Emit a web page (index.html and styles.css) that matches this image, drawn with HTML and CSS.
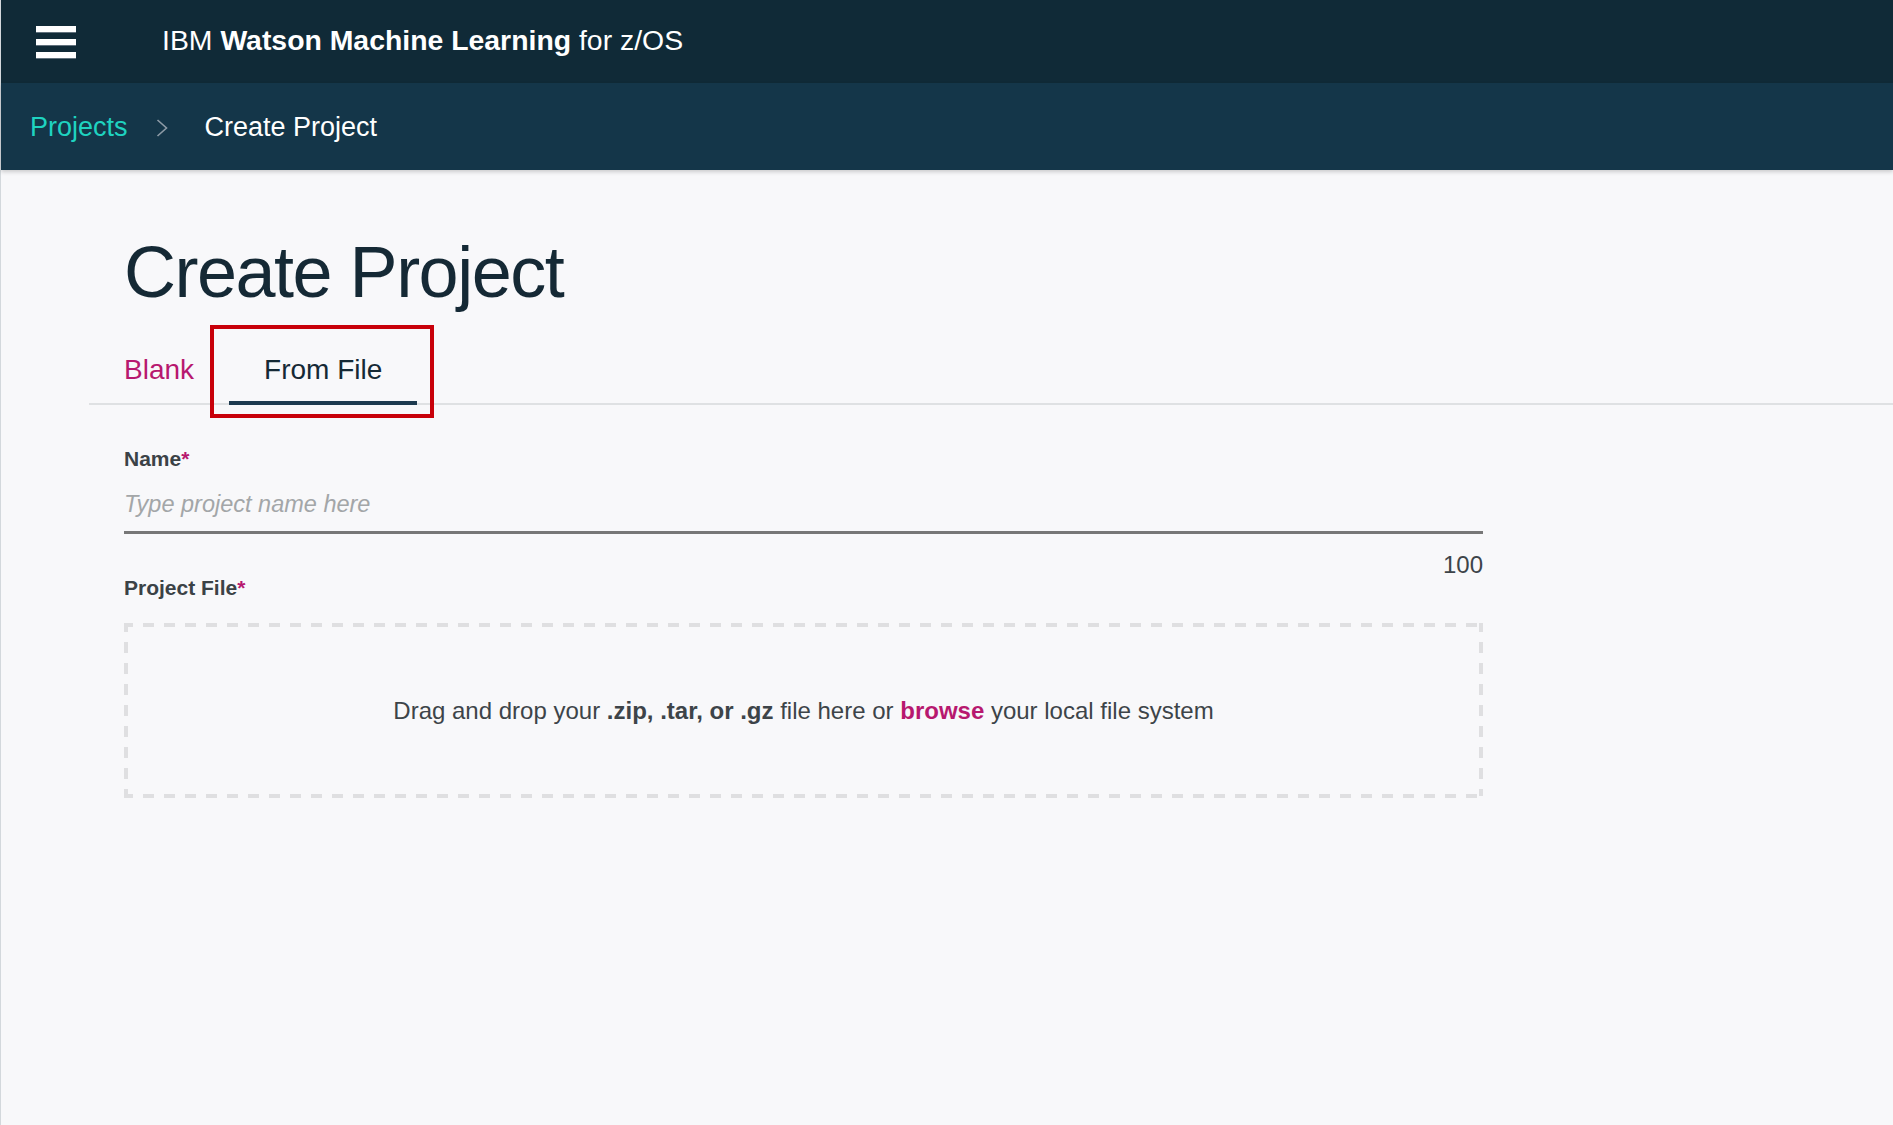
FILE: index.html
```html
<!DOCTYPE html>
<html lang="en">
<head>
<meta charset="utf-8">
<title>Create Project - IBM Watson Machine Learning for z/OS</title>
<link rel="stylesheet" href="styles.css">
</head>
<body>
<div class="app">
  <header class="topbar">
    <button class="menu" aria-label="Menu">
      <span class="bar"></span><span class="bar"></span><span class="bar"></span>
    </button>
    <div class="product"><span>IBM</span> <strong>Watson Machine Learning</strong> <span>for z/OS</span></div>
  </header>
  <nav class="crumbs">
    <a class="crumb-link" href="#">Projects</a>
    <svg class="chevron" width="12" height="18" viewBox="0 0 12 18"><polyline points="1.5,1 10.5,9 1.5,17" fill="none" stroke="#8d9ba6" stroke-width="1.6"/></svg>
    <span class="crumb-current">Create Project</span>
  </nav>
  <main class="main">
    <h1 class="title">Create Project</h1>
    <div class="tabs">
      <div class="tab">Blank</div>
      <div class="tab active">From File<span class="highlight"></span></div>
    </div>
    <form class="form">
      <label class="label">Name<span class="req">*</span></label>
      <input class="input" type="text" placeholder="Type project name here">
      <div class="counter">100</div>
      <label class="label">Project File<span class="req">*</span></label>
      <div class="dropzone">
        <p>Drag and drop your <b>.zip, .tar, or .gz</b> file here or <a class="browse" href="#">browse</a> your local file system</p>
      </div>
    </form>
  </main>
</div>
</body>
</html>
```
FILE: styles.css
```css
* { box-sizing: border-box; }
html, body { margin: 0; padding: 0; height: 100%; }
body {
  background: #f8f8fa;
  font-family: "Liberation Sans", Arial, Helvetica, sans-serif;
  color: #3d4449;
}
.app {
  min-height: 100%;
  border-left: 1px solid #d3d8dc;
}
.topbar {
  height: 83px;
  background: #102a37;
  display: flex;
  align-items: center;
}
.menu {
  margin: 1px 0 0 35px;
  padding: 0;
  border: 0;
  background: transparent;
  display: flex;
  flex-direction: column;
  gap: 7px;
  width: 40px;
}
.bar {
  display: block;
  width: 40px;
  height: 6px;
  background: #ffffff;
  box-shadow: 0 1px 0 rgba(150,160,170,0.6);
}
.product {
  margin-left: 86px;
  margin-bottom: 2px;
  color: #ffffff;
  font-size: 28.4px;
  white-space: pre;
}
.product strong { font-weight: 700; }
.crumbs {
  height: 87px;
  background: #143649;
  display: flex;
  align-items: center;
  padding: 2px 0 0 29px;
  box-shadow: 0 2px 4px rgba(0,0,0,0.18);
  position: relative;
  font-size: 27px;
}
.crumb-link { color: #1fd3c0; text-decoration: none; }
.chevron { margin-left: 28px; margin-right: 37px; }
.crumb-current { color: #ffffff; }
.main { padding-left: 123px; }
.title {
  margin: 66px 0 0 0;
  font-size: 72px;
  line-height: 72px;
  font-weight: 400;
  letter-spacing: -1.5px;
  color: #152935;
}
.tabs {
  margin: 47px 0 0 -35px;
  display: flex;
  border-bottom: 2px solid #dfe1e3;
}
.tab {
  position: relative;
  padding: 1px 35px 17px;
  font-size: 28px;
  line-height: 28px;
  color: #b7186f;
  border-bottom: 4px solid transparent;
  margin-bottom: -2px;
}
.tab.active {
  color: #152935;
  border-bottom-color: #1d3a4f;
}
.highlight {
  position: absolute;
  left: -19px;
  right: -17px;
  top: -30px;
  bottom: -17px;
  border: 4px solid #c8000a;
}
.form {
  width: 1359px;
  display: flex;
  flex-direction: column;
  padding-top: 43px;
}
.label {
  font-size: 21px;
  line-height: 21px;
  font-weight: 700;
  color: #3b4246;
}
.req { color: #b7186f; }
.input {
  margin-top: 13px;
  height: 52px;
  padding: 0 0 5px 0;
  border: 0;
  border-bottom: 3px solid #777777;
  background: transparent;
  font-family: "Liberation Sans", Arial, sans-serif;
  font-size: 23.5px;
  color: #3d4449;
  outline: none;
}
.input::placeholder { color: #a3a6a8; font-style: italic; }
.counter {
  margin-top: 19px;
  text-align: right;
  font-size: 24px;
  line-height: 24px;
  color: #3d4449;
}
.dropzone {
  margin-top: 25px;
  height: 175px;
  display: flex;
  align-items: center;
  justify-content: center;
  background:
    repeating-linear-gradient(to right, #dfdfe1 0 11px, transparent 11px 21px) -2px 0 / 100% 4px no-repeat,
    repeating-linear-gradient(to right, #dfdfe1 0 11px, transparent 11px 21px) -2px 100% / 100% 4px no-repeat,
    repeating-linear-gradient(to bottom, #dfdfe1 0 11px, transparent 11px 21px) 0 -2px / 4px 100% no-repeat,
    repeating-linear-gradient(to bottom, #dfdfe1 0 11px, transparent 11px 21px) 100% -2px / 4px 100% no-repeat;
}
.dropzone p {
  margin: 0;
  font-size: 24px;
  color: #3d4449;
}
.dropzone b { font-weight: 700; }
.browse { color: #b7186f; font-weight: 700; text-decoration: none; }
```
